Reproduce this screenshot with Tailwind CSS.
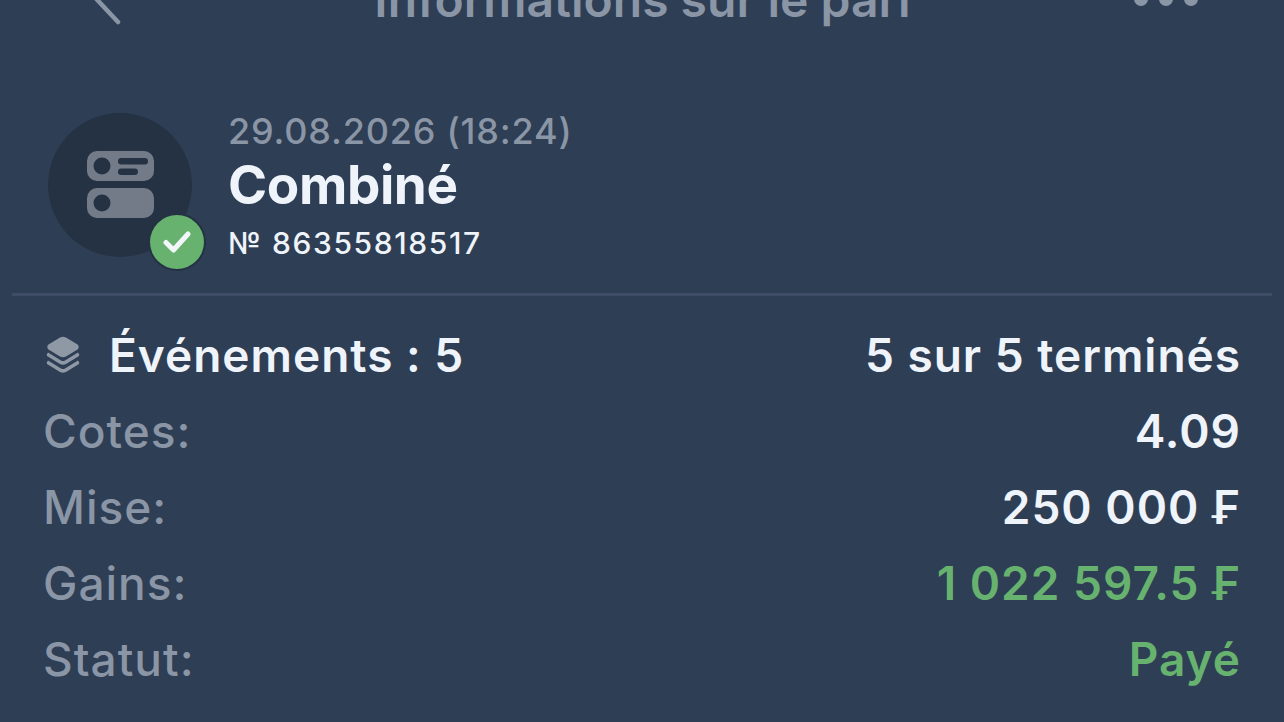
<!DOCTYPE html>
<html lang="fr">
<head>
<meta charset="utf-8">
<script src="https://cdn.jsdelivr.net/npm/@tailwindcss/browser@4"></script>
</head>
<body class="m-0 bg-[#2e3e54]">
<div class="w-[1284px] h-[722px] overflow-hidden bg-[#2e3e54] font-['Inter',sans-serif]">
  <header class="relative h-[50px] -mt-[25px] flex items-center justify-between pl-[87px] pr-[86px] mb-[82px]">
    <div class="w-[140px] flex"><svg width="44" height="60" viewBox="0 0 44 60" fill="none" class="block"><path d="M31 52 L1 20" stroke="#8a95a5" stroke-width="4.5" stroke-linecap="round"/></svg></div>
    <div class="text-[48px] leading-[50px] font-semibold text-[#8a95a5] whitespace-nowrap">Informations sur le pari</div>
    <div class="w-[140px] flex justify-end gap-[11px] -mt-[2px]"><span class="w-[14px] h-[14px] rounded-full bg-[#8a95a5]"></span><span class="w-[14px] h-[14px] rounded-full bg-[#8a95a5]"></span><span class="w-[14px] h-[14px] rounded-full bg-[#8a95a5]"></span></div>
  </header>
  <section class="flex items-center gap-[36px] pl-[48px] h-[156px] mb-[30px]">
    <div class="relative w-[144px] h-[144px] rounded-full bg-[#253244] flex items-center justify-center">
      <svg width="68" height="68" viewBox="0 0 68 68" class="block translate-x-[1px]"><rect x="0" y="0" width="67" height="30" rx="10" fill="#737b88"/><circle cx="15" cy="15" r="8.5" fill="#253244"/><rect x="31" y="7" width="30" height="6.5" rx="3.2" fill="#253244"/><rect x="31" y="17.5" width="20" height="6.5" rx="3.2" fill="#253244"/><rect x="0" y="37" width="67" height="30" rx="10" fill="#737b88"/><circle cx="15" cy="52" r="8.5" fill="#253244"/></svg>
      <div class="absolute left-[102px] top-[102px] w-[54px] h-[54px] rounded-full bg-[#67b26f] flex items-center justify-center shadow-[0_0_0_2px_#253244]">
        <svg width="28" height="24" viewBox="0 0 28 24" fill="none" class="block"><path d="M3 12.5 L10.5 20 L25 4" stroke="#f3f6fb" stroke-width="5" stroke-linecap="round" stroke-linejoin="round"/></svg>
      </div>
    </div>
    <div class="flex flex-col pt-[4px]">
      <div class="text-[36px] leading-[40px] font-medium text-[#8a95a5] tracking-[0.8px] whitespace-nowrap">29.08.2026 (18:24)</div>
      <div class="text-[53px] leading-[68px] font-bold tracking-[-0.4px] text-[#eff3fa] whitespace-nowrap">Combiné</div>
      <div class="mt-[4px] text-[30px] leading-[40px] font-medium text-[#eff3fa] tracking-[1.6px] whitespace-nowrap">№ 86355818517</div>
    </div>
  </section>
  <div class="mx-[12px] h-[3px] bg-[#3f4e66]"></div>
  <section class="pl-[43px] pr-[43px] pt-[21px] text-[46px] tracking-[1px]">
    <div class="flex items-center justify-between h-[76px] font-semibold text-[#eff3fa]">
      <div class="flex items-center gap-[29px] pl-[3px]">
        <svg width="34" height="38" viewBox="0 0 34 38" class="block"><path d="M14 1.5 Q17 0 20 1.5 L31.5 8.5 Q34 11 31.5 13.5 L20 20.5 Q17 22 14 20.5 L2.5 13.5 Q0 11 2.5 8.5 Z" fill="#8f98a5"/><path d="M2 16.5 L15 24.5 Q17 25.5 19 24.5 L32 16.5 Q34 18.5 33 20 L20 28 Q17 29.5 14 28 L1 20 Q0 18.5 2 16.5 Z" fill="#8f98a5"/><path d="M2 24.5 L15 32.5 Q17 33.5 19 32.5 L32 24.5 Q34 26.5 33 28 L20 36 Q17 37.5 14 36 L1 28 Q0 26.5 2 24.5 Z" fill="#8f98a5"/></svg>
        <span>Événements : 5</span>
      </div>
      <span>5 sur 5 terminés</span>
    </div>
    <div class="flex items-center justify-between h-[76px]"><span class="font-medium text-[#8a95a5]">Cotes:</span><span class="font-semibold text-[#eff3fa]">4.09</span></div>
    <div class="flex items-center justify-between h-[76px]"><span class="font-medium text-[#8a95a5]">Mise:</span><span class="font-semibold text-[#eff3fa]">250 000 ₣</span></div>
    <div class="flex items-center justify-between h-[76px]"><span class="font-medium text-[#8a95a5]">Gains:</span><span class="font-semibold text-[#67b26f]">1 022 597.5 ₣</span></div>
    <div class="flex items-center justify-between h-[76px]"><span class="font-medium text-[#8a95a5]">Statut:</span><span class="font-semibold text-[#67b26f]">Payé</span></div>
  </section>
</div>
</body>
</html>
